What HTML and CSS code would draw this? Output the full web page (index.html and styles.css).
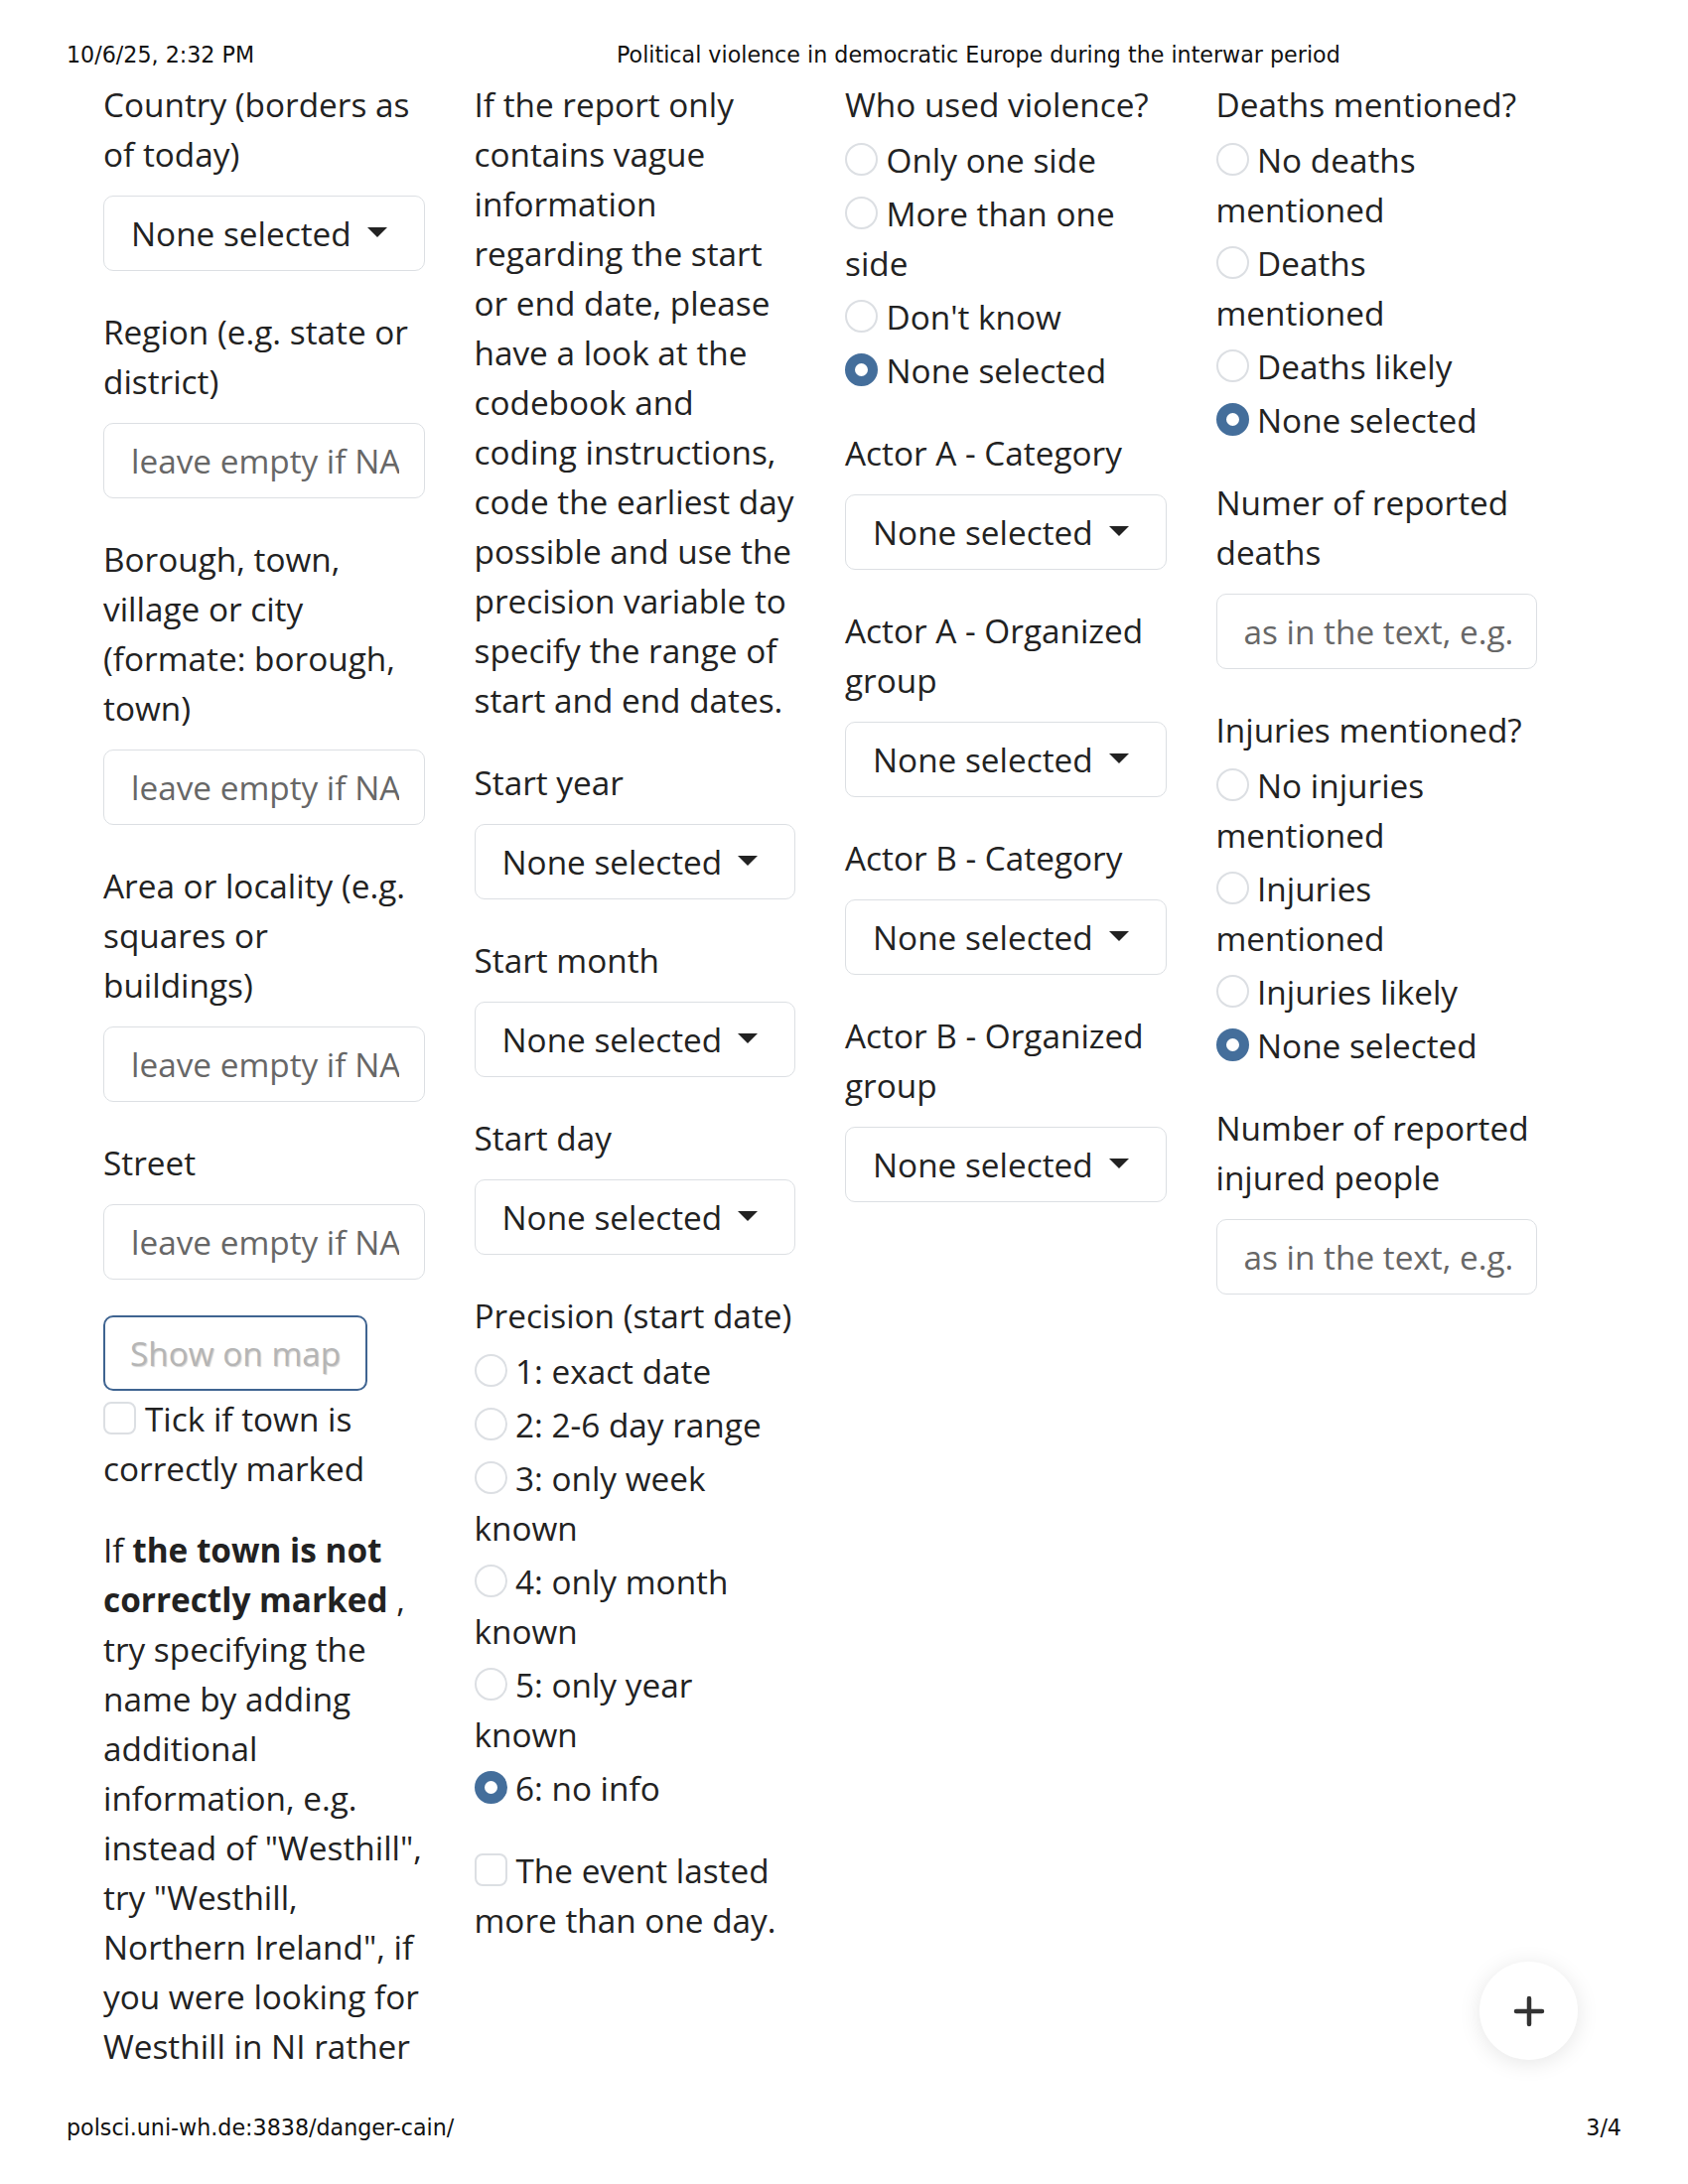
FILE: index.html
```html
<!DOCTYPE html>
<html lang="en">
<head>
<meta charset="utf-8">
<title>Political violence in democratic Europe during the interwar period</title>
<link rel="stylesheet" href="styles.css">
</head>
<body>
<header class="print-header">
  <span class="print-date">10/6/25, 2:32 PM</span>
  <span class="print-title">Political violence in democratic Europe during the interwar period</span>
</header>

<main class="sheet">
  <div class="form-row">
    <section class="col">
      <div class="field">
        <label class="field-label">Country (borders as of today)</label>
        <div class="select-box"><span class="select-text">None selected</span><span class="caret"></span></div>
      </div>
      <div class="field">
        <label class="field-label">Region (e.g. state or district)</label>
        <input class="text-input" type="text" placeholder="leave empty if NA">
      </div>
      <div class="field">
        <label class="field-label">Borough, town, village or city (formate: borough, town)</label>
        <input class="text-input" type="text" placeholder="leave empty if NA">
      </div>
      <div class="field">
        <label class="field-label">Area or locality (e.g. squares or buildings)</label>
        <input class="text-input" type="text" placeholder="leave empty if NA">
      </div>
      <div class="field">
        <label class="field-label">Street</label>
        <input class="text-input" type="text" placeholder="leave empty if NA">
      </div>
      <button class="map-button" type="button">Show on map</button>
      <div class="check-field">
        <div class="check"><span class="check-box"></span>Tick if town is correctly marked</div>
      </div>
      <p class="note">If <strong>the town is not correctly marked</strong> , try specifying the name by adding additional information, e.g. instead of "Westhill", try "Westhill, Northern Ireland", if you were looking for Westhill in NI rather</p>
    </section>

    <section class="col">
      <p class="note">If the report only contains vague information regarding the start or end date, please have a look at the codebook and coding instructions, code the earliest day possible and use the precision variable to specify the range of start and end dates.</p>
      <div class="field">
        <label class="field-label">Start year</label>
        <div class="select-box"><span class="select-text">None selected</span><span class="caret"></span></div>
      </div>
      <div class="field">
        <label class="field-label">Start month</label>
        <div class="select-box"><span class="select-text">None selected</span><span class="caret"></span></div>
      </div>
      <div class="field">
        <label class="field-label">Start day</label>
        <div class="select-box"><span class="select-text">None selected</span><span class="caret"></span></div>
      </div>
      <div class="field radio-group">
        <div class="group-label">Precision (start date)</div>
        <div class="radio"><span class="radio-dot"></span>1: exact date</div>
        <div class="radio"><span class="radio-dot"></span>2: 2-6 day range</div>
        <div class="radio"><span class="radio-dot"></span>3: only week known</div>
        <div class="radio"><span class="radio-dot"></span>4: only month known</div>
        <div class="radio"><span class="radio-dot"></span>5: only year known</div>
        <div class="radio"><span class="radio-dot is-checked"></span>6: no info</div>
      </div>
      <div class="check-field">
        <div class="check"><span class="check-box"></span>The event lasted more than one day.</div>
      </div>
    </section>

    <section class="col">
      <div class="field radio-group">
        <div class="group-label">Who used violence?</div>
        <div class="radio"><span class="radio-dot"></span>Only one side</div>
        <div class="radio"><span class="radio-dot"></span>More than one side</div>
        <div class="radio"><span class="radio-dot"></span>Don't know</div>
        <div class="radio"><span class="radio-dot is-checked"></span>None selected</div>
      </div>
      <div class="field">
        <label class="field-label">Actor A - Category</label>
        <div class="select-box"><span class="select-text">None selected</span><span class="caret"></span></div>
      </div>
      <div class="field">
        <label class="field-label">Actor A - Organized group</label>
        <div class="select-box"><span class="select-text">None selected</span><span class="caret"></span></div>
      </div>
      <div class="field">
        <label class="field-label">Actor B - Category</label>
        <div class="select-box"><span class="select-text">None selected</span><span class="caret"></span></div>
      </div>
      <div class="field">
        <label class="field-label">Actor B - Organized group</label>
        <div class="select-box"><span class="select-text">None selected</span><span class="caret"></span></div>
      </div>
    </section>

    <section class="col">
      <div class="field radio-group">
        <div class="group-label">Deaths mentioned?</div>
        <div class="radio"><span class="radio-dot"></span>No deaths mentioned</div>
        <div class="radio"><span class="radio-dot"></span>Deaths mentioned</div>
        <div class="radio"><span class="radio-dot"></span>Deaths likely</div>
        <div class="radio"><span class="radio-dot is-checked"></span>None selected</div>
      </div>
      <div class="field">
        <label class="field-label">Numer of reported deaths</label>
        <input class="text-input" type="text" placeholder="as in the text, e.g.">
      </div>
      <div class="field radio-group">
        <div class="group-label">Injuries mentioned?</div>
        <div class="radio"><span class="radio-dot"></span>No injuries mentioned</div>
        <div class="radio"><span class="radio-dot"></span>Injuries mentioned</div>
        <div class="radio"><span class="radio-dot"></span>Injuries likely</div>
        <div class="radio"><span class="radio-dot is-checked"></span>None selected</div>
      </div>
      <div class="field">
        <label class="field-label">Number of reported injured people</label>
        <input class="text-input" type="text" placeholder="as in the text, e.g.">
      </div>
    </section>
  </div>
</main>

<footer class="print-footer">
  <span>polsci.uni-wh.de:3838/danger-cain/</span>
  <span>3/4</span>
</footer>

<button class="fab" type="button" aria-label="Add">
  <svg width="32" height="32" viewBox="0 0 32 32"><path d="M16 3v26M3 16h26" stroke="#333" stroke-width="4.5" stroke-linecap="round" fill="none"/></svg>
</button>
</body>
</html>
```

FILE: styles.css
```css
* { box-sizing: border-box; }

html, body {
  margin: 0;
  padding: 0;
  background: #fff;
}

body {
  position: relative;
  width: 1700px;
  height: 2200px;
  overflow: hidden;
  font-family: "Open Sans", "Noto Sans", sans-serif;
  color: #222;
}

.print-header {
  display: grid;
  grid-template-columns: 554px auto;
  height: 80px;
  padding: 40px 0 0 67px;
  font-family: "DejaVu Sans", sans-serif;
  font-size: 22.2px;
  line-height: 30px;
  color: #111;
}

.sheet {
  height: 2008px;
  overflow: hidden;
  padding-left: 79px;
  font-size: 33.33px;
  line-height: 50px;
}

.form-row {
  display: grid;
  grid-template-columns: repeat(4, 373.5px);
}

.col {
  padding: 0 25px;
  min-width: 0;
}

.field {
  margin-bottom: 36px;
}

.field-label {
  display: block;
  margin-bottom: 17px;
}

.select-box {
  display: flex;
  align-items: center;
  height: 76px;
  padding: 0 25px 0 27px;
  border: 1px solid #dcdfe3;
  border-radius: 10px;
  background: #fff;
}

.caret {
  width: 0;
  height: 0;
  margin-left: 16px;
  margin-top: -3px;
  border-top: 10px solid #222;
  border-left: 10px solid transparent;
  border-right: 10px solid transparent;
}

.text-input {
  display: block;
  width: 100%;
  height: 76px;
  padding: 0 25px 0 27px;
  border: 1px solid #dcdfe3;
  border-radius: 10px;
  background: #fff;
  font: inherit;
  color: #222;
  outline: none;
}

.text-input::placeholder {
  color: #676767;
  opacity: 1;
}

.radio-group {
  margin-bottom: 33px;
}

.group-label {
  margin-bottom: 6px;
}

.radio {
  margin-bottom: 4px;
}

.radio-dot {
  display: inline-block;
  width: 33px;
  height: 33px;
  margin-right: 8.5px;
  vertical-align: -3px;
  border: 2px solid #dcdfe3;
  border-radius: 50%;
  background: #fff;
}

.radio-dot.is-checked {
  border: 10.5px solid #446e9b;
  background: #fff;
}

.check-field {
  margin-bottom: 32px;
}

.check-box {
  display: inline-block;
  width: 33px;
  height: 33px;
  margin-right: 9px;
  vertical-align: -3px;
  border: 2px solid #dcdfe3;
  border-radius: 8px;
  background: #fff;
}

.map-button {
  display: block;
  height: 76px;
  margin-bottom: 3px;
  padding: 0 25px;
  border: 2px solid #3f6491;
  border-radius: 10px;
  background: #fff;
  font: inherit;
  color: #b5b5b5;
  text-shadow: 1px 1px 1px rgba(0, 0, 0, 0.18);
  cursor: pointer;
}

.note {
  margin: 0 0 33px;
}

.note strong {
  font-weight: 700;
}

.print-footer {
  display: flex;
  justify-content: space-between;
  margin-top: 40px;
  padding: 0 67px;
  font-family: "DejaVu Sans", sans-serif;
  font-size: 22.2px;
  line-height: 30px;
  color: #111;
}

.fab {
  position: absolute;
  left: 1490px;
  top: 1976px;
  width: 99px;
  height: 99px;
  display: flex;
  align-items: center;
  justify-content: center;
  padding: 0;
  border: none;
  border-radius: 50%;
  background: #fff;
  box-shadow: 0 3px 22px rgba(0, 0, 0, 0.1);
}
```
